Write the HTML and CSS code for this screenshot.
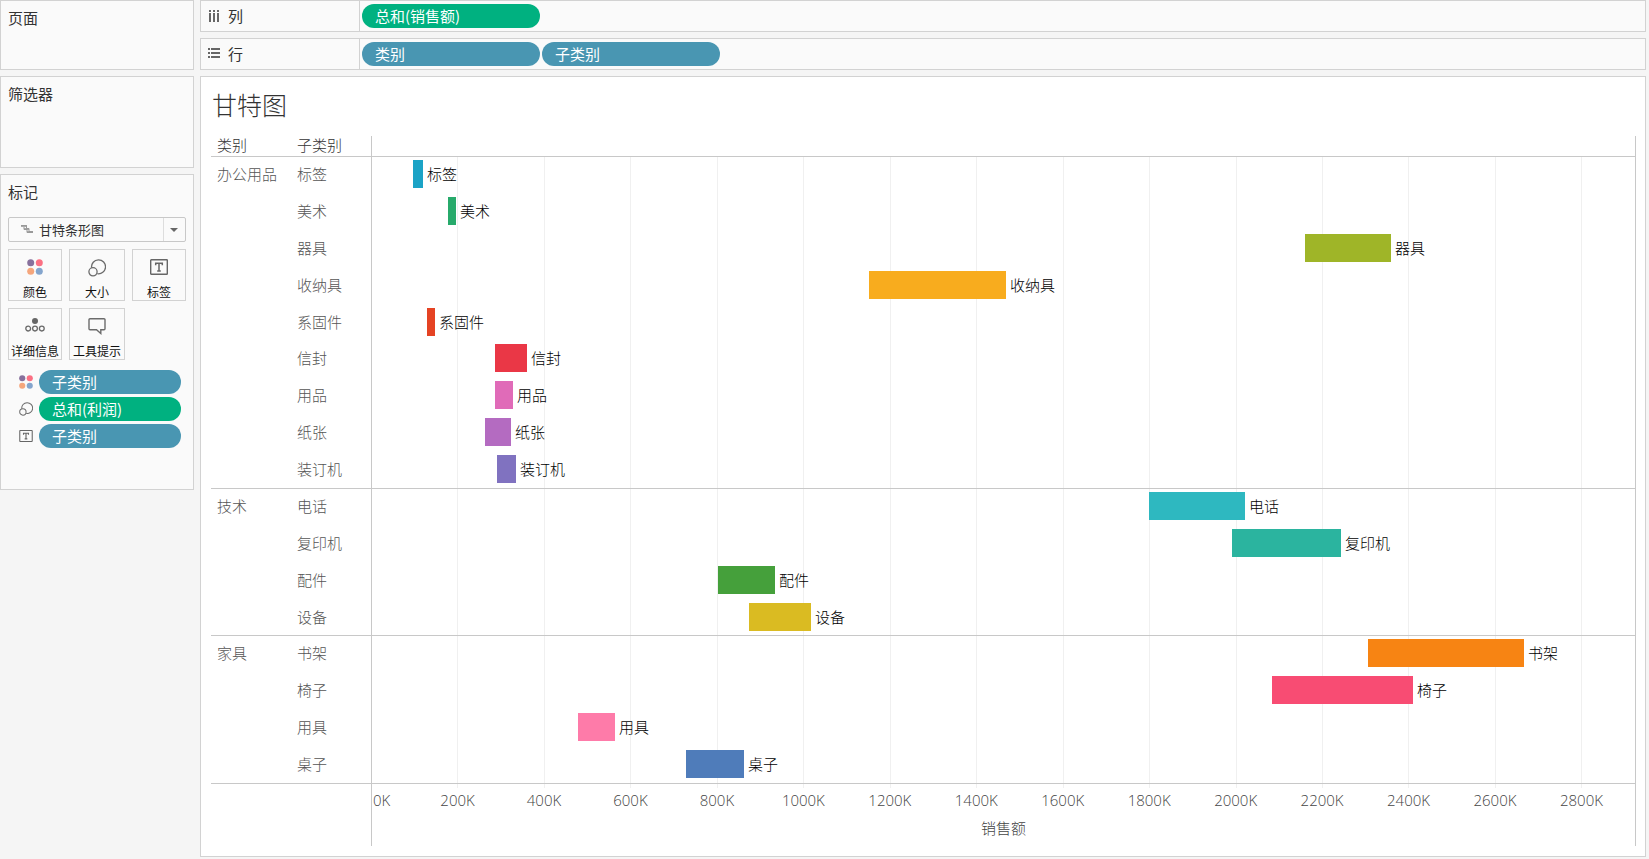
FILE: index.html
```html
<!DOCTYPE html>
<html lang="zh-CN">
<head>
<meta charset="utf-8">
<title>甘特图</title>
<link rel="stylesheet" href="styles.css">
</head>
<body>
<svg class="defs" width="0" height="0" aria-hidden="true">
  <symbol id="i-color" viewBox="0 0 16 16">
    <circle cx="3.7" cy="3.7" r="3.5" fill="#87709c"/><circle cx="12.3" cy="3.7" r="3.5" fill="#fb7083"/>
    <circle cx="3.7" cy="12.3" r="3.5" fill="#f5a67c"/><circle cx="12.3" cy="12.3" r="3.5" fill="#84a5cd"/>
  </symbol>
  <symbol id="i-size" viewBox="0 0 18 18">
    <g fill="none" stroke="#6b6b6b" stroke-width="1.3"><path d="M3.600 8.700A7 7 0 1 1 9.300 14.700"/><circle cx="5" cy="12.8" r="4.1"/></g>
  </symbol>
  <symbol id="i-label" viewBox="0 0 18 16">
    <rect x=".7" y=".7" width="16.6" height="14.6" rx=".6" fill="none" stroke="#666" stroke-width="1.4"/>
    <path d="M5.700 6.200V4.300h6.600V6.200M9 4.300v7.600M7.200 11.900h3.600" fill="none" stroke="#666" stroke-width="1.5"/>
  </symbol>
  <symbol id="i-detail" viewBox="0 0 20 14">
    <circle cx="10" cy="3" r="3" fill="#666"/>
    <g fill="none" stroke="#6b6b6b" stroke-width="1.3"><circle cx="3.200" cy="10.600" r="2.400"/><circle cx="10" cy="10.600" r="2.400"/><circle cx="16.800" cy="10.600" r="2.400"/></g>
  </symbol>
  <symbol id="i-tip" viewBox="0 0 18 17">
    <path d="M2 .8h14a1 1 0 0 1 1 1v9a1 1 0 0 1-1 1h-3.2V15.500L8.500 11.800H2a1 1 0 0 1-1-1v-9a1 1 0 0 1 1-1z" fill="none" stroke="#6b6b6b" stroke-width="1.4"/>
  </symbol>
</svg>

<div class="app">
  <aside class="side">
    <section class="panel pages"><h2>页面</h2></section>
    <section class="panel filters"><h2>筛选器</h2></section>
    <section class="panel marks">
      <h2>标记</h2>
      <div class="mark-type">
        <svg class="gantt-icon" width="12" height="9" viewBox="0 0 12 9" aria-hidden="true"><path d="M0 0h6v2H0zM3 3h5v2H3zM6 6h6v2H6z" fill="#aaa"/><path d="M0 .5h5.500v3h2.500v3h4M3 2v2.500h3v3h6" fill="none" stroke="#999"/></svg>
        <select aria-label="标记类型"><option>甘特条形图</option></select>
      </div>
      <div class="cards">
        <button class="card" type="button"><svg width="16" height="16"><use href="#i-color"/></svg><span>颜色</span></button>
        <button class="card" type="button"><svg width="18" height="18"><use href="#i-size"/></svg><span>大小</span></button>
        <button class="card" type="button"><svg width="18" height="16"><use href="#i-label"/></svg><span>标签</span></button>
        <button class="card" type="button"><svg width="20" height="14"><use href="#i-detail"/></svg><span>详细信息</span></button>
        <button class="card" type="button"><svg width="18" height="17"><use href="#i-tip"/></svg><span>工具提示</span></button>
      </div>
      <ul class="encodings">
        <li><svg width="14" height="14"><use href="#i-color"/></svg><button class="pill dim" type="button">子类别</button></li>
        <li><svg width="14" height="14"><use href="#i-size"/></svg><button class="pill measure" type="button">总和(利润)</button></li>
        <li><svg width="14" height="12"><use href="#i-label"/></svg><button class="pill dim" type="button">子类别</button></li>
      </ul>
    </section>
  </aside>

  <main class="main">
    <div class="shelf">
      <div class="shelf-name"><svg width="12" height="12" viewBox="0 0 12 12" aria-hidden="true"><path d="M1 0h2v2H1zM5 0h2v2H5zM9 0h2v2H9zM1 3h2v9H1zM5 3h2v9H5zM9 3h2v9H9z" fill="#666"/></svg>列</div>
      <button class="pill measure" type="button">总和(销售额)</button>
    </div>
    <div class="shelf">
      <div class="shelf-name"><svg width="12" height="12" viewBox="0 0 12 12" aria-hidden="true"><path d="M0 0h2v2H0zM3 0h9v2H3zM0 4h2v2H0zM3 4h9v2H3zM0 8h2v2H0zM3 8h9v2H3z" fill="#666"/></svg>行</div>
      <button class="pill dim" type="button">类别</button>
      <button class="pill dim" type="button">子类别</button>
    </div>

    <section class="viz">
      <h1>甘特图</h1>
      <div class="chart">
        <div class="head"><span class="cat">类别</span><span class="sub">子类别</span><span class="head-plot"></span></div>
        <div class="body">
          <div class="grid" aria-hidden="true"><i></i><i></i><i></i><i></i><i></i><i></i><i></i><i></i><i></i><i></i><i></i><i></i><i></i><i></i></div>
          <div class="group long">
            <span class="cat">办公用品</span>
            <div class="rows">
              <div class="row"><span class="sub">标签</span><div class="track"><div class="bar" style="margin-left:3.246%;width:.792%;background:#1ba3c6"></div><span>标签</span></div></div>
              <div class="row"><span class="sub">美术</span><div class="track"><div class="bar" style="margin-left:6.017%;width:.633%;background:#27aa6b"></div><span>美术</span></div></div>
              <div class="row"><span class="sub">器具</span><div class="track"><div class="bar" style="margin-left:73.872%;width:6.809%;background:#9fb528"></div><span>器具</span></div></div>
              <div class="row"><span class="sub">收纳具</span><div class="track"><div class="bar" style="margin-left:39.351%;width:10.847%;background:#f8ac1e"></div><span>收纳具</span></div></div>
              <div class="row"><span class="sub">系固件</span><div class="track"><div class="bar" style="margin-left:4.355%;width:.633%;background:#e54323"></div><span>系固件</span></div></div>
              <div class="row"><span class="sub">信封</span><div class="track"><div class="bar" style="margin-left:9.739%;width:2.534%;background:#ea3746"></div><span>信封</span></div></div>
              <div class="row"><span class="sub">用品</span><div class="track"><div class="bar" style="margin-left:9.739%;width:1.425%;background:#e06bb8"></div><span>用品</span></div></div>
              <div class="row"><span class="sub">纸张</span><div class="track"><div class="bar" style="margin-left:8.947%;width:2.059%;background:#b46bc1"></div><span>纸张</span></div></div>
              <div class="row"><span class="sub">装订机</span><div class="track"><div class="bar" style="margin-left:9.897%;width:1.504%;background:#8072c0"></div><span>装订机</span></div></div>
            </div>
          </div>
          <div class="group">
            <span class="cat">技术</span>
            <div class="rows">
              <div class="row"><span class="sub">电话</span><div class="track"><div class="bar" style="margin-left:61.52%;width:7.601%;background:#2eb8c0"></div><span>电话</span></div></div>
              <div class="row"><span class="sub">复印机</span><div class="track"><div class="bar" style="margin-left:68.092%;width:8.63%;background:#2bb49f"></div><span>复印机</span></div></div>
              <div class="row"><span class="sub">配件</span><div class="track"><div class="bar" style="margin-left:27.395%;width:4.513%;background:#45a03b"></div><span>配件</span></div></div>
              <div class="row"><span class="sub">设备</span><div class="track"><div class="bar" style="margin-left:29.85%;width:4.909%;background:#dabb22"></div><span>设备</span></div></div>
            </div>
          </div>
          <div class="group">
            <span class="cat">家具</span>
            <div class="rows">
              <div class="row"><span class="sub">书架</span><div class="track"><div class="bar" style="margin-left:78.86%;width:12.352%;background:#f78413"></div><span>书架</span></div></div>
              <div class="row"><span class="sub">椅子</span><div class="track"><div class="bar" style="margin-left:71.259%;width:11.164%;background:#f84c73"></div><span>椅子</span></div></div>
              <div class="row"><span class="sub">用具</span><div class="track"><div class="bar" style="margin-left:16.31%;width:2.93%;background:#fe7ba9"></div><span>用具</span></div></div>
              <div class="row"><span class="sub">桌子</span><div class="track"><div class="bar" style="margin-left:24.861%;width:4.592%;background:#4f7cba"></div><span>桌子</span></div></div>
            </div>
          </div>
        </div>
        <div class="axis">
          <div class="ticks"><span>0K</span><span>200K</span><span>400K</span><span>600K</span><span>800K</span><span>1000K</span><span>1200K</span><span>1400K</span><span>1600K</span><span>1800K</span><span>2000K</span><span>2200K</span><span>2400K</span><span>2600K</span><span>2800K</span></div>
          <div class="axis-title">销售额</div>
        </div>
      </div>
    </section>
  </main>
</div>
</body>
</html>
```

FILE: styles.css
```css
* { box-sizing: border-box; }

body {
  margin: 0;
  background: #f5f5f5;
  color: #333;
  font: 15px/20px "Noto Sans CJK SC", "Liberation Sans", sans-serif;
}

.defs { position: absolute; }

button, select { font: inherit; color: inherit; margin: 0; }

.app {
  display: flex;
  gap: 6px;
  min-height: 100vh;
  padding: 0 3px 2px 0;
}

.side {
  flex: none;
  width: 194px;
  display: flex;
  flex-direction: column;
  gap: 6px;
}

.panel {
  border: 1px solid #d2d2d2;
  background: #fafafa;
  padding: 7px;
}

.panel h2 {
  margin: 0;
  font-size: 15px;
  font-weight: 400;
  line-height: 20px;
}

.pages { min-height: 70px; }
.filters { min-height: 92px; }
.marks { min-height: 316px; }

.mark-type {
  position: relative;
  margin-top: 15px;
}

.mark-type select {
  display: block;
  width: 100%;
  height: 25px;
  padding: 0 24px 0 30px;
  border: 1px solid #c8c8c8;
  border-radius: 2px;
  background: #fafafa;
  appearance: none;
  font-size: 13px;
}

.mark-type::before {
  content: "";
  position: absolute;
  right: 22px;
  top: 1px;
  bottom: 1px;
  border-left: 1px solid #ddd;
}

.mark-type::after {
  content: "";
  position: absolute;
  right: 8px;
  top: 11px;
  border: 4px solid transparent;
  border-top-color: #666;
  border-bottom: 0;
}

.gantt-icon { position: absolute; left: 13px; top: 8px; }

.cards {
  display: grid;
  grid-template-columns: 54fr 56fr 54fr;
  gap: 7px;
  margin-top: 7px;
}

.card {
  height: 52px;
  display: flex;
  flex-direction: column;
  align-items: center;
  justify-content: space-between;
  padding: 9px 0 0;
  border: 1px solid #d2d2d2;
  background: #fafafa;
  color: #111;
  font-size: 12px;
  line-height: 16px;
  white-space: nowrap;
}

.encodings {
  list-style: none;
  margin: 10px 5px 0 11px;
  padding: 0;
  display: grid;
  gap: 3px;
}

.encodings li {
  display: flex;
  align-items: center;
  gap: 6px;
}

.encodings svg { flex: none; }
.encodings .pill { flex: 1; }

.pill {
  height: 24px;
  padding: 0 13px;
  border: 0;
  border-radius: 12px;
  color: #fff;
  font-size: 15px;
  line-height: 24px;
  text-align: left;
}

.dim { background: #4996b2; }
.measure { background: #00b180; }

.main {
  flex: 1;
  min-width: 0;
  display: flex;
  flex-direction: column;
  gap: 6px;
}

.shelf {
  display: flex;
  align-items: center;
  gap: 2px;
  height: 32px;
  border: 1px solid #d2d2d2;
  background: #fafafa;
}

.shelf-name {
  flex: none;
  display: flex;
  align-items: center;
  gap: 8px;
  align-self: stretch;
  width: 159px;
  padding-left: 7px;
  border-right: 1px solid #d2d2d2;
}

.shelf .pill { flex: none; width: 178px; }

.viz {
  flex: 1;
  display: flex;
  flex-direction: column;
  padding: 0 9px 10px 10px;
  border: 1px solid #d2d2d2;
  background: #fff;
}

.viz h1 {
  margin: 0;
  padding: 0 0 5px 1px;
  font-size: 25px;
  font-weight: 300;
  line-height: 54px;
}

.chart {
  flex: 1;
  display: flex;
  flex-direction: column;
  font-weight: 300;
}

.cat { flex: none; width: 86px; padding-left: 6px; }
.sub { flex: none; width: 74px; }

.head {
  display: flex;
  height: 21px;
  border-bottom: 1px solid #c8c8c8;
  color: #333;
  line-height: 18px;
}

.head-plot {
  flex: 1;
  border: solid #c8c8c8;
  border-width: 0 1px;
}

.body {
  position: relative;
  flex: 1;
  display: flex;
  flex-direction: column;
  color: #555;
  line-height: 34px;
}

.grid {
  position: absolute;
  left: 161px;
  right: 1px;
  top: 0;
  bottom: -4px;
  display: flex;
}

.grid i {
  flex: none;
  width: 6.846%;
  border-right: 1px solid #f0f0f0;
}

.group {
  position: relative;
  flex: 4 1 0;
  display: flex;
}

.group.long { flex-grow: 9; }

.group::after {
  content: "";
  position: absolute;
  left: 0;
  right: 0;
  bottom: 0;
  border-bottom: 1px solid #c8c8c8;
}

.rows {
  flex: 1;
  display: flex;
  flex-direction: column;
}

.row { flex: 1; display: flex; }

.track {
  flex: 1;
  display: flex;
  gap: 4px;
  border: solid #c8c8c8;
  border-width: 0 1px;
  color: #000;
  white-space: nowrap;
}

.bar { flex: none; height: 28px; margin-top: 3px; }

.axis {
  height: 62px;
  margin-left: 160px;
  border: solid #c8c8c8;
  border-width: 0 1px;
  color: #444;
}

.ticks {
  display: flex;
  padding-top: 6px;
  font-family: "Open Sans", "Noto Sans CJK SC", sans-serif;
}

.ticks span { flex: none; width: 6.846%; text-align: center; }
.ticks span:first-child { width: 3.352%; padding-left: 1px; text-align: left; }

.axis-title { margin-top: 8px; text-align: center; }
```
